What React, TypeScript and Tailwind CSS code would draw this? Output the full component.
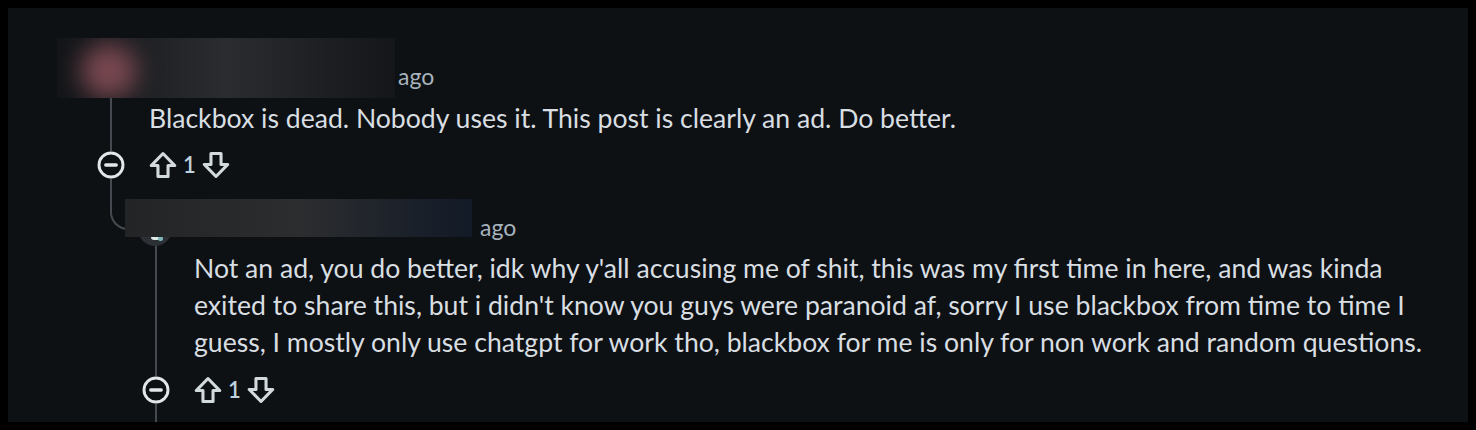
import React from 'react';

function CollapseIcon() {
  return (
    <svg width="28" height="28" viewBox="0 0 28 28" fill="none" className="shrink-0">
      <circle cx="14" cy="14" r="12" stroke="#e4e7ea" strokeWidth="2.9" />
      <line x1="8.8" y1="14" x2="19.2" y2="14" stroke="#e4e7ea" strokeWidth="3.4" strokeLinecap="round" />
    </svg>
  );
}

function VoteArrow({ down = false }: { down?: boolean }) {
  return (
    <svg
      width="28"
      height="28"
      viewBox="0 0 20 20"
      fill="none"
      className={down ? 'shrink-0 rotate-180' : 'shrink-0'}
    >
      <path
        d="M10 1.8 L18.4 10.4 H13.6 V18.2 H6.4 V10.4 H1.6 Z"
        stroke="#d3dade"
        strokeWidth="2.2"
        strokeLinejoin="round"
      />
    </svg>
  );
}

function Actions({ count }: { count: number }) {
  return (
    <div className="flex items-center h-[28px]">
      <CollapseIcon />
      <div className="ml-[24px] flex items-center">
        <VoteArrow />
        <span className="w-[25px] text-center text-[22px] leading-[28px] font-semibold text-[#bfd0de]">{count}</span>
        <VoteArrow down />
      </div>
    </div>
  );
}

function Gutter() {
  return (
    <div className="w-[28px] shrink-0 flex justify-center">
      <div className="w-[2px] h-full bg-[#454a50]" />
    </div>
  );
}

const reply = [
  "Not an ad, you do better, idk why y'all accusing me of shit, this was my first time in here, and was kinda",
  "exited to share this, but i didn't know you guys were paranoid af, sorry I use blackbox from time to time I",
  'guess, I mostly only use chatgpt for work tho, blackbox for me is only for non work and random questions.',
];

export default function App() {
  return (
    <div className="w-[1476px] h-[430px] bg-black p-2 font-[Lato,'Liberation_Sans',sans-serif]">
      <div className="h-full bg-[#0e1113] overflow-hidden">
        <div className="ml-[89px] mt-[30px]">
          {/* top comment header (blurred) */}
          <div className="flex items-end h-[60px]">
            <div className="-ml-[40px] w-[338px] h-[60px] relative overflow-hidden bg-linear-to-r from-[#131518] via-[#2a2c2f] to-[#141619]">
              <div className="absolute left-[24px] top-[6px] w-[56px] h-[54px] rounded-full bg-[#7a4851] blur-[12px]" />
            </div>
            <span className="ml-[3px] mb-[7px] text-[23px] leading-[30px] text-[#a7b3bd]">ago</span>
          </div>

          <div className="flex h-[53px]">
            <Gutter />
            <p className="ml-[24px] pt-[2px] text-[26.6px] leading-[37px] text-[#d8dee2] whitespace-nowrap">
              Blackbox is dead. Nobody uses it. This post is clearly an ad. Do better.
            </p>
          </div>

          <Actions count={1} />

          {/* reply */}
          <div className="flex">
            <div className="w-[28px] shrink-0">
              <div className="ml-[13px] w-[22px] h-[51px] border-l-2 border-b-2 border-[#454a50] rounded-bl-[18px]" />
            </div>

            <div className="pt-[20px]">
              <div className="flex items-end h-[38px] relative">
                <div className="absolute left-[13px] top-[13px] w-[34px] h-[34px] rounded-full bg-[#2c3034] overflow-hidden">
                  <div className="absolute left-[13px] top-[22px] w-[9px] h-[6px] rounded-full bg-[#dfe9ea]" />
                  <div className="absolute left-[20px] top-[24px] w-[5px] h-[5px] rounded-full bg-[#7fb7bd]" />
                </div>
                <div className="relative z-10 w-[347px] h-[38px] bg-linear-to-r from-[#232426] via-[#2c2d2f] to-[#121a27]" />
                <span className="ml-[8px] -mb-[5px] text-[23px] leading-[30px] text-[#a7b3bd]">ago</span>
              </div>

              <div className="ml-[17px]">
                <div className="flex h-[139px]">
                  <Gutter />
                  <p className="ml-[24px] pt-[13px] text-[26.6px] leading-[37px] text-[#d8dee2]">
                    {reply.map((l) => (
                      <span key={l} className="block whitespace-nowrap">{l}</span>
                    ))}
                  </p>
                </div>
                <Actions count={1} />
                <div className="flex h-[30px]">
                  <Gutter />
                </div>
              </div>
            </div>
          </div>
        </div>
      </div>
    </div>
  );
}
